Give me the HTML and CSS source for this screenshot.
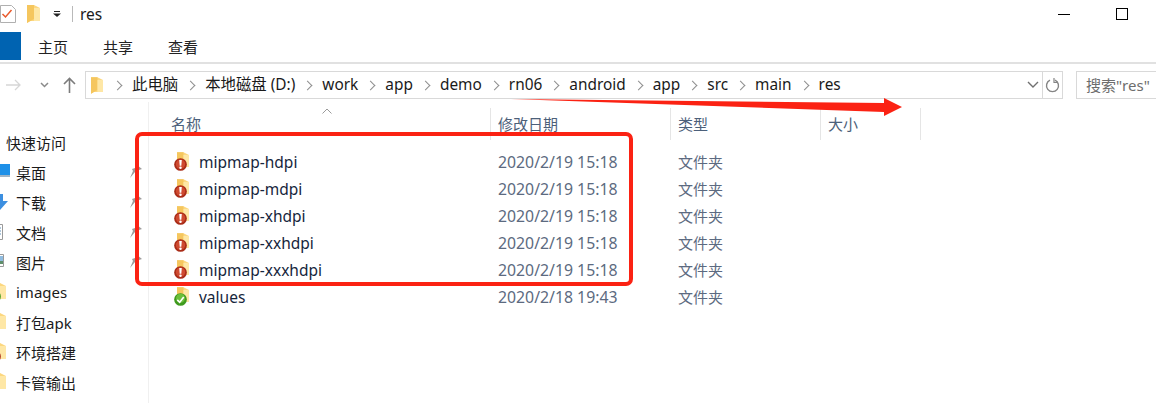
FILE: index.html
```html
<!DOCTYPE html>
<html lang="zh">
<head>
  <meta charset="UTF-8">
  <title>res</title>
  <link rel="stylesheet" href="styles.css">
</head>
<body>

<svg class="defs" width="0" height="0">
  <symbol id="folder" viewBox="0 0 13 18">
    <path d="M0 0h7l6 3v13H3l-3 2z" fill="#fcd77f"/>
    <path d="M0 0h7v14l-7 4z" fill="#f5c65e"/>
    <path d="M7 3h6v13H7z" fill="#fee7a6"/>
  </symbol>
  <symbol id="badge-warn" viewBox="0 0 16 16">
    <circle cx="8" cy="8" r="7.8" fill="#a92c18"/>
    <circle cx="8" cy="7.500" r="5.800" fill="#cf4a30"/>
    <path d="M6.400 2.500h3.200l-.6 7H7z" fill="#fff"/>
    <circle cx="8" cy="12" r="1.500" fill="#fff"/>
  </symbol>
  <symbol id="badge-ok" viewBox="0 0 16 16">
    <circle cx="8" cy="8" r="7.800" fill="#3f9a1e"/>
    <circle cx="8" cy="6.500" r="5.500" fill="#6cc03a"/>
    <path d="M4 8.500l3 3 5-6.500" fill="none" stroke="#fff" stroke-width="2"/>
  </symbol>
  <symbol id="pin" viewBox="0 0 12 14">
    <path d="M7 0l5 4-3 1-1 3-3-1-5 6 3-7-1-2 3-1z" fill="#9c9c9c"/>
  </symbol>
</svg>

<header class="titlebar">
  <div class="qa-check">
    <svg width="16" height="18" viewBox="0 0 16 18"><path d="M.5.500h11l4 4v13H.5z" fill="#fff" stroke="#b0b0b0"/><path d="M2.500 9l3 3 6-7" fill="none" stroke="#e8592b" stroke-width="1.500"/></svg>
  </div>
  <svg class="qa-folder" width="13" height="18"><use href="#folder"/></svg>
  <svg class="qa-drop" width="8" height="6" viewBox="0 0 8 6"><path d="M1 0h6v1H1z" fill="#222"/><path d="M0 2.500h8L4 6z" fill="#222"/></svg>
  <span class="qa-sep"></span>
  <span class="win-title">res</span>
  <span class="win-btns">
    <span class="win-min"></span>
    <span class="win-max"></span>
  </span>
</header>

<nav class="tabs">
  <span class="tab-file"></span>
  <span class="tab">主页</span>
  <span class="tab">共享</span>
  <span class="tab">查看</span>
</nav>

<div class="navbar">
  <svg class="nav-btn back" width="16" height="12" viewBox="0 0 16 12"><path d="M0 6h14M9 1l5 5-5 5" fill="none" stroke="#d6d6d6" stroke-width="1.300"/></svg>
  <svg class="nav-btn recent" width="9" height="6" viewBox="0 0 9 6"><path d="M1 1l3.500 3.500L8 1" fill="none" stroke="#8a8a8a" stroke-width="1.500"/></svg>
  <svg class="nav-btn up" width="13" height="16" viewBox="0 0 13 16"><path d="M6.500 16V2M1 7l5.500-5.500L12 7" fill="none" stroke="#7c7c7c" stroke-width="1.600"/></svg>
  <div class="addr">
    <svg class="addr-folder" width="12" height="17"><use href="#folder"/></svg>
    <span class="crumb">此电脑</span>
    <span class="crumb">本地磁盘 (D:)</span>
    <span class="crumb">work</span>
    <span class="crumb">app</span>
    <span class="crumb">demo</span>
    <span class="crumb">rn06</span>
    <span class="crumb">android</span>
    <span class="crumb">app</span>
    <span class="crumb">src</span>
    <span class="crumb">main</span>
    <span class="crumb">res</span>
    <svg class="addr-drop" width="12" height="8" viewBox="0 0 12 8"><path d="M1 1l5 5 5-5" fill="none" stroke="#707070" stroke-width="1.400"/></svg>
    <span class="addr-refresh">
      <svg width="15" height="15" viewBox="0 0 15 15"><path d="M10 2.200a6 6 0 1 1-5 0" fill="none" stroke="#858585" stroke-width="1.400"/><path d="M9 0v4.500h4" fill="none" stroke="#858585" stroke-width="1.200"/></svg>
    </span>
  </div>
  <div class="search">搜索"res"</div>
</div>

<div class="main">
  <aside class="sidebar">
    <div class="side-head">快速访问</div>
    <div class="side-item">
      <svg class="side-icon" width="16" height="14" viewBox="0 0 16 14"><path d="M0 0h16v11H0z" fill="#1e90e8"/><path d="M0 11h16v2H0z" fill="#9fb4c6"/></svg>
      <span>桌面</span><svg class="pin" width="12" height="14"><use href="#pin"/></svg>
    </div>
    <div class="side-item">
      <svg class="side-icon" width="16" height="16" viewBox="0 0 16 16"><path d="M3 0h6v7h5l-8 9-6-9h3z" fill="#3c8fe0"/></svg>
      <span>下载</span><svg class="pin" width="12" height="14"><use href="#pin"/></svg>
    </div>
    <div class="side-item">
      <svg class="side-icon" width="16" height="16" viewBox="0 0 16 16"><path d="M.5.500h8v15h-8z" fill="#fff" stroke="#9a9a9a"/><path d="M2 4h5M2 7h5M2 10h5" stroke="#5c8fb8"/></svg>
      <span>文档</span><svg class="pin" width="12" height="14"><use href="#pin"/></svg>
    </div>
    <div class="side-item">
      <svg class="side-icon" width="16" height="14" viewBox="0 0 16 14"><path d="M.5.500h9v12h-9z" fill="#fff" stroke="#9a9a9a"/><path d="M1 2h8v5H1z" fill="#8fbce0"/><path d="M1 7h8v3H1z" fill="#5f8f6a"/></svg>
      <span>图片</span><svg class="pin" width="12" height="14"><use href="#pin"/></svg>
    </div>
    <div class="side-item">
      <span class="side-folder side-ok"><svg width="13" height="18"><use href="#folder"/></svg><svg class="side-badge" width="13" height="13"><use href="#badge-ok"/></svg></span>
      <span>images</span>
    </div>
    <div class="side-item">
      <span class="side-folder"><svg width="13" height="18"><use href="#folder"/></svg></span>
      <span>打包apk</span>
    </div>
    <div class="side-item">
      <span class="side-folder"><svg width="13" height="18"><use href="#folder"/></svg><svg class="side-badge" width="13" height="13"><use href="#badge-warn"/></svg></span>
      <span>环境搭建</span>
    </div>
    <div class="side-item">
      <span class="side-folder"><svg width="13" height="18"><use href="#folder"/></svg></span>
      <span>卡管输出</span>
    </div>
  </aside>

  <section class="files">
    <div class="col-head">
      <span class="col col-name">名称<svg class="sort" width="10" height="6" viewBox="0 0 10 6"><path d="M.5 5.500L5 1l4.500 4.500" fill="none" stroke="#9a9a9a"/></svg></span>
      <span class="col col-date">修改日期</span>
      <span class="col col-type">类型</span>
      <span class="col col-size">大小</span>
    </div>

    <div class="row">
      <span class="file-icon"><svg class="f" width="12" height="17"><use href="#folder"/></svg><svg class="b" width="13" height="13"><use href="#badge-warn"/></svg></span>
      <span class="name">mipmap-hdpi</span><span class="date">2020/2/19 15:18</span><span class="type">文件夹</span>
    </div>
    <div class="row">
      <span class="file-icon"><svg class="f" width="12" height="17"><use href="#folder"/></svg><svg class="b" width="13" height="13"><use href="#badge-warn"/></svg></span>
      <span class="name">mipmap-mdpi</span><span class="date">2020/2/19 15:18</span><span class="type">文件夹</span>
    </div>
    <div class="row">
      <span class="file-icon"><svg class="f" width="12" height="17"><use href="#folder"/></svg><svg class="b" width="13" height="13"><use href="#badge-warn"/></svg></span>
      <span class="name">mipmap-xhdpi</span><span class="date">2020/2/19 15:18</span><span class="type">文件夹</span>
    </div>
    <div class="row">
      <span class="file-icon"><svg class="f" width="12" height="17"><use href="#folder"/></svg><svg class="b" width="13" height="13"><use href="#badge-warn"/></svg></span>
      <span class="name">mipmap-xxhdpi</span><span class="date">2020/2/19 15:18</span><span class="type">文件夹</span>
    </div>
    <div class="row">
      <span class="file-icon"><svg class="f" width="12" height="17"><use href="#folder"/></svg><svg class="b" width="13" height="13"><use href="#badge-warn"/></svg></span>
      <span class="name">mipmap-xxxhdpi</span><span class="date">2020/2/19 15:18</span><span class="type">文件夹</span>
    </div>
    <div class="row">
      <span class="file-icon"><svg class="f" width="12" height="17"><use href="#folder"/></svg><svg class="b" width="13" height="13"><use href="#badge-ok"/></svg></span>
      <span class="name">values</span><span class="date">2020/2/18 19:43</span><span class="type">文件夹</span>
    </div>
  </section>
</div>

<!-- red annotations drawn over the screenshot -->
<div class="mark-box"></div>
<svg class="mark-arrow" width="392" height="20" viewBox="0 0 392 20">
  <path d="M0 1L373 5L373 0L391 9L373 18L373 14Z" fill="#fb2213"/>
</svg>

</body>
</html>
```

FILE: styles.css
```css
* {
  box-sizing: border-box;
}
html, body {
  margin: 0;
  height: 403px;
  overflow: hidden;
}
body {
  position: relative;
  width: 1156px;
  background: #fff;
  color: #1a1a1a;
  font-family: "Noto Sans", "Noto Sans CJK SC", sans-serif;
  font-size: 15px;
}
.defs {
  position: absolute;
}
svg {
  display: block;
  flex: none;
}

/* title bar */
.titlebar {
  display: flex;
  align-items: center;
  height: 32px;
  padding-bottom: 4px;
}
.qa-folder {
  margin-left: 11px;
}
.qa-drop {
  margin-left: 13px;
}
.qa-sep {
  width: 1px;
  height: 16px;
  margin-left: 11px;
  background: #b9b9b9;
}
.win-title {
  margin-left: 7px;
  font-size: 15.500px;
}
.win-btns {
  display: flex;
  align-items: center;
  margin-left: auto;
  margin-right: 28px;
}
.win-min {
  width: 12px;
  height: 1px;
  background: #000;
}
.win-max {
  width: 12px;
  height: 12px;
  margin-left: 46px;
  border: 1px solid #000;
}

/* ribbon tabs */
.tabs {
  display: flex;
  align-items: center;
  height: 32px;
  border-bottom: 2px solid #e1e1e1;
  padding-bottom: 2px;
}
.tab-file {
  width: 21px;
  height: 28px;
  margin-right: 17px;
  background: #0063b1;
}
.tab {
  width: 65px;
  font-size: 15px;
  color: #222;
}

/* address row */
.navbar {
  display: flex;
  align-items: center;
  height: 34px;
  margin-top: 4px;
}
.nav-btn.back {
  margin-left: 6px;
}
.nav-btn.recent {
  margin-left: 18px;
}
.nav-btn.up {
  margin-left: 14px;
}
.addr {
  display: flex;
  flex: none;
  align-items: center;
  width: 978px;
  height: 28px;
  margin-left: 9px;
  border: 1px solid #d9d9d9;
  padding-left: 5px;
}
.addr-folder {
  margin-right: 29px;
}
.crumb {
  font-size: 15.400px;
  line-height: 22px;
  margin-right: 27px;
  position: relative;
}
.crumb::before {
  content: "";
  position: absolute;
  left: -18px;
  top: 8px;
  width: 6px;
  height: 6px;
  border-top: 1.500px solid #8e8e8e;
  border-right: 1.500px solid #8e8e8e;
  transform: rotate(45deg);
}
.addr-drop {
  margin-left: auto;
  margin-right: 3px;
}
.addr-refresh {
  display: flex;
  align-items: center;
  justify-content: center;
  width: 20px;
  height: 26px;
  border-left: 1px solid #d9d9d9;
}
.search {
  flex: none;
  width: 100px;
  height: 28px;
  margin-left: 13px;
  border: 1px solid #d9d9d9;
  padding-left: 9px;
  font-size: 15px;
  line-height: 26px;
  color: #6d6d6d;
  white-space: nowrap;
}

/* sidebar + file list */
.main {
  display: flex;
  height: 301px;
}
.sidebar {
  width: 149px;
  flex: none;
  padding-top: 26px;
  border-right: 1px solid #f0f0f0;
  overflow: hidden;
}
.side-head {
  height: 29px;
  line-height: 30px;
  padding-left: 6px;
  font-size: 15px;
}
.side-item {
  display: flex;
  align-items: center;
  height: 30px;
  padding-left: 16px;
  font-size: 15px;
  position: relative;
}
.side-icon {
  position: absolute;
  left: -6px;
  top: 7px;
}
.pin {
  position: absolute;
  left: 130px;
  top: 8px;
}
.side-folder {
  position: absolute;
  left: -7px;
  top: 6px;
}
.side-badge {
  position: absolute;
  left: -5px;
  top: 7px;
}

.files {
  flex: 1;
  min-width: 0;
}
.col-head {
  display: flex;
  height: 32px;
  padding-left: 21px;
  margin-top: 6px;
  margin-bottom: 8px;
  font-size: 15px;
  color: #4c607a;
}
.col {
  position: relative;
  line-height: 33px;
  height: 32px;
  border-right: 1px solid #e5e5e5;
}
.col-name {
  width: 321px;
  padding-left: 1px;
}
.col-date {
  width: 180px;
  padding-left: 7px;
}
.col-type {
  width: 150px;
  padding-left: 7px;
}
.col-size {
  width: 100px;
  padding-left: 7px;
}
.sort {
  position: absolute;
  left: 152px;
  top: 0;
}
.row {
  display: flex;
  align-items: center;
  height: 27px;
}
.file-icon {
  position: relative;
  flex: none;
  width: 16px;
  height: 20px;
  margin-left: 24px;
}
.file-icon .f {
  position: absolute;
  left: 4px;
  top: 0;
}
.file-icon .b {
  position: absolute;
  left: 1px;
  top: 6px;
}
.name {
  width: 299px;
  margin-left: 10px;
  font-size: 15.500px;
  color: #16263c;
}
.date {
  width: 180px;
  font-size: 15.800px;
  color: #5c6a80;
}
.type {
  font-size: 15px;
  color: #5c6a80;
}

/* annotations */
.mark-box {
  position: absolute;
  left: 135px;
  top: 132px;
  width: 498px;
  height: 154px;
  border: 4px solid #fb2213;
  border-radius: 7px;
}
.mark-arrow {
  position: absolute;
  left: 511px;
  top: 98px;
}
```
